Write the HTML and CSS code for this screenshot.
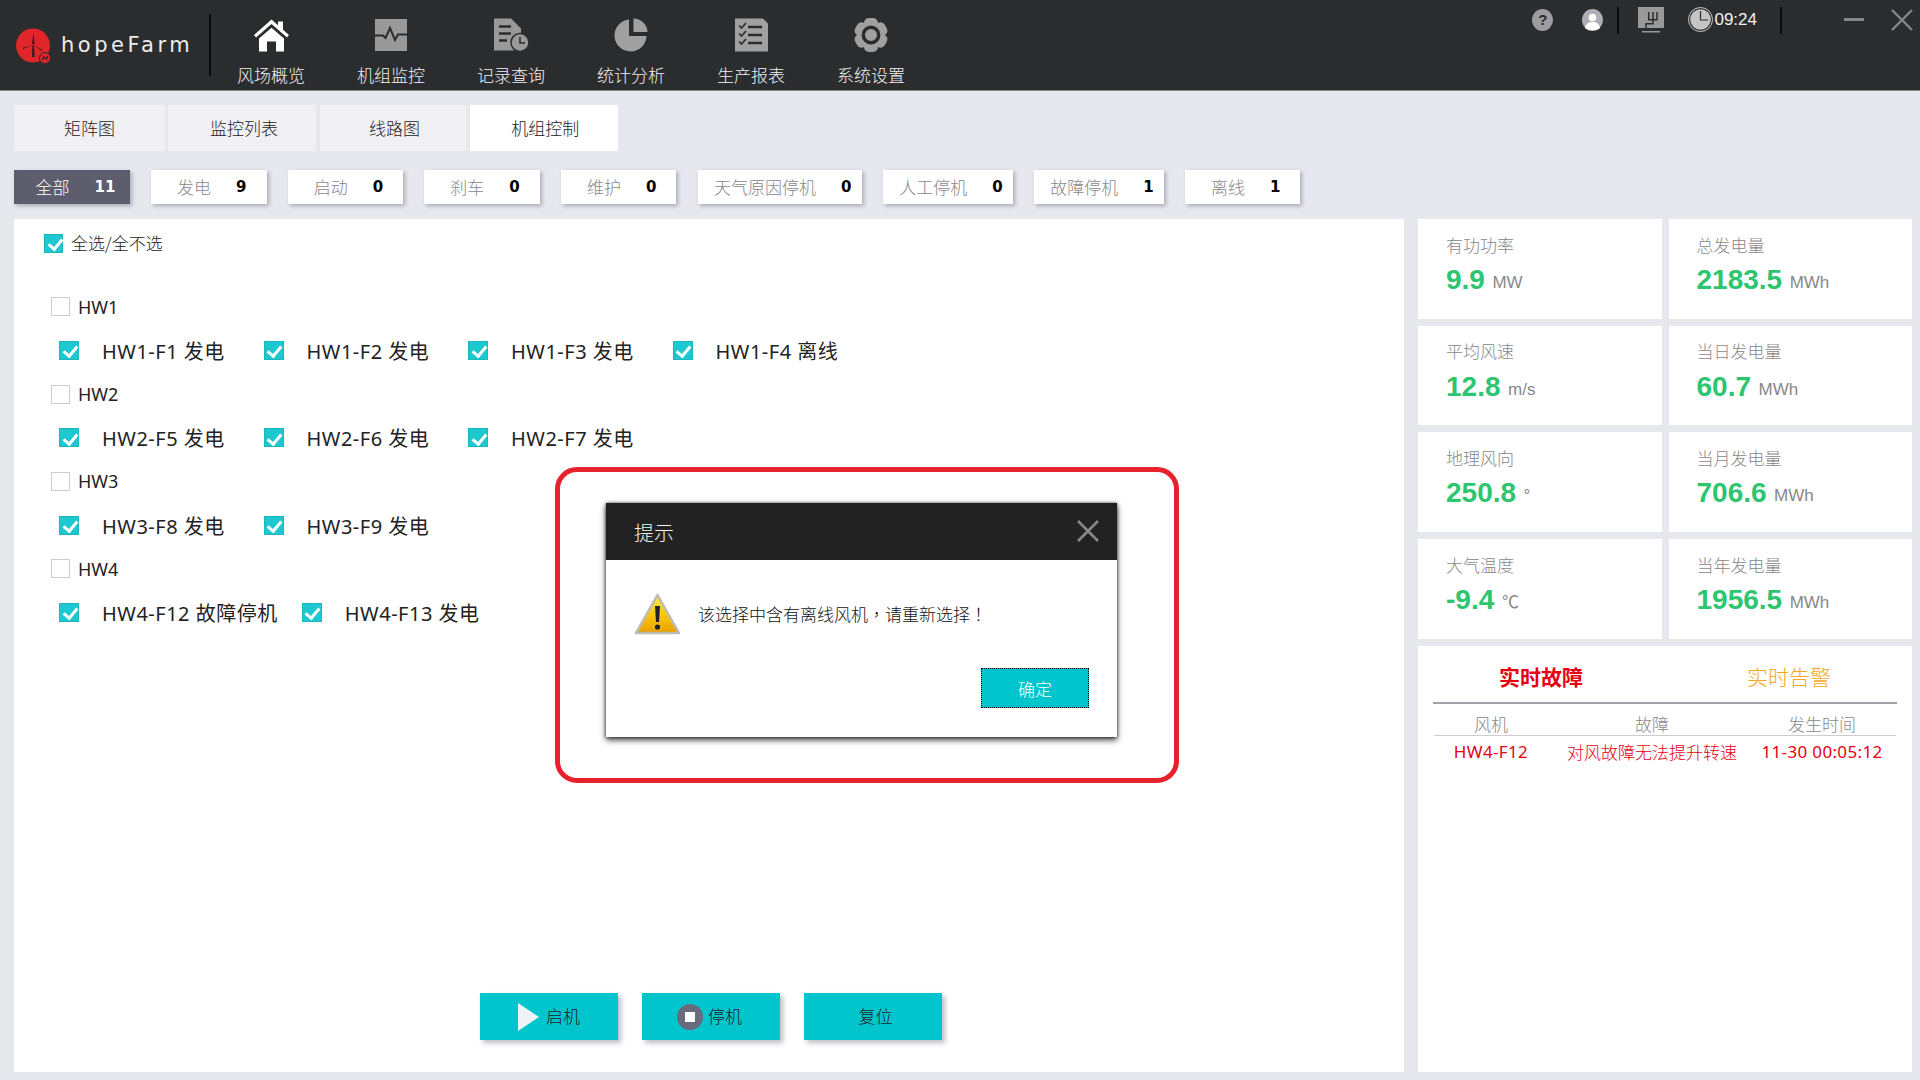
FILE: index.html
```html
<!DOCTYPE html>
<html lang="zh-CN">
<head>
  <meta charset="UTF-8" />
  <title>hopeFarm 机组控制</title>
  <link rel="stylesheet" href="styles.css">
</head>
<body>
  <header class="topbar">
    <div class="logo">
      <svg class="logo-mark" width="36" height="37" viewBox="0 0 36 37">
        <circle cx="17" cy="17.5" r="17" fill="#e0252b"/>
        <path d="M16 16 L17.5 5 L18.5 16 Z M16.5 17 L7 21 L6.5 20 Z M18 16.5 L26 22 L25.5 23 Z" fill="#2b2020"/>
        <path d="M16.5 17 H18 L18.6 29 H16 Z" fill="#2b2020"/>
        <circle cx="29" cy="30" r="5.5" fill="#e0252b" stroke="#2b2c2e" stroke-width="1"/>
        <path d="M26.5 32 L28 28 M31.5 28 L30 32 M27.5 30 H30.5" stroke="#2b2020" stroke-width="1.2"/>
      </svg>
      <span class="logo-text">hopeFarm</span>
    </div>
    <nav class="nav">
      <a class="nav-item">
        <svg width="35" height="33" viewBox="0 0 35 33"><path d="M0 16.5 L17.5 1 L24 6.8 V3 H29 V11.2 L35 16.5 L33 19 L17.5 5.6 L2 19 Z" fill="#fff"/><path d="M5 20 L17.5 9.2 L30 20 V33 H22 V23 H13 V33 H5 Z" fill="#fff"/></svg>
        <span>风场概览</span>
      </a>
      <a class="nav-item">
        <svg width="32" height="32" viewBox="0 0 32 32"><rect width="32" height="32" fill="#999"/><path d="M0 16.5 H8 L10.5 19 L15 9 L20 21 L23 15.5 H32" fill="none" stroke="#2b2c2e" stroke-width="2"/></svg>
        <span>机组监控</span>
      </a>
      <a class="nav-item">
        <svg width="35" height="33" viewBox="0 0 35 33"><path d="M0 0 H17 L27 10 V32 H0 Z" fill="#999"/><path d="M5 8 H17 M5 15 H17 M5 22 H13" stroke="#2b2c2e" stroke-width="2.4"/><circle cx="26" cy="24" r="9" fill="#999" stroke="#2b2c2e" stroke-width="1.5"/><path d="M26 18.5 V24.5 H31" fill="none" stroke="#2b2c2e" stroke-width="1.6"/></svg>
        <span>记录查询</span>
      </a>
      <a class="nav-item">
        <svg width="34" height="33" viewBox="0 0 34 33"><path d="M15 1 A16 16 0 1 0 32.5 17.5 H15 Z" fill="#a0a0a0"/><path d="M19.5 0 A14 14 0 0 1 33.5 13.5 H19.5 Z" fill="#a0a0a0"/></svg>
        <span>统计分析</span>
      </a>
      <a class="nav-item">
        <svg width="33" height="33" viewBox="0 0 33 33"><path d="M0 0 H28 L33 5 V33 H0 Z" fill="#a0a0a0"/><g fill="none" stroke="#2b2c2e"><path d="M4 7 L6.5 9.5 L11 4.5 M4 15 L6.5 17.5 L11 12.5 M4 23 L6.5 25.5 L11 20.5" stroke-width="1.7"/><path d="M13 8.5 H27 M13 16.5 H27 M13 24.5 H27" stroke-width="2.5"/></g></svg>
        <span>生产报表</span>
      </a>
      <a class="nav-item">
        <svg width="36" height="34" viewBox="0 0 36 34"><g fill="#a0a0a0"><rect x="11" y="0" width="14" height="34" rx="5"/><rect x="11" y="0" width="14" height="34" rx="5" transform="rotate(60 18 17)"/><rect x="11" y="0" width="14" height="34" rx="5" transform="rotate(120 18 17)"/></g><circle cx="18" cy="17" r="13" fill="#a0a0a0"/><circle cx="18" cy="17" r="7.7" fill="none" stroke="#2b2c2e" stroke-width="3.4"/></svg>
        <span>系统设置</span>
      </a>
    </nav>
    <div class="tools">
      <span class="tool-help">?</span>
      <svg class="tool-user" width="21" height="22" viewBox="0 0 21 22"><ellipse cx="10.5" cy="11" rx="10.5" ry="11" fill="#aeaeb6"/><circle cx="10.5" cy="8.5" r="3.8" fill="#fff"/><path d="M3 19 C4 14 7 13 10.5 13 C14 13 17 14 18 19 C15 22 6 22 3 19 Z" fill="#fff"/></svg>
      <i class="tool-sep sep-a"></i>
      <svg class="tool-screen" width="26" height="26" viewBox="0 0 26 26"><rect width="26" height="21" fill="#999"/><path d="M10.7 5 V12.7 H19 V5 M15 5 V16.7 H8 V21" fill="none" stroke="#2b2c2e" stroke-width="1.5"/><rect x="4" y="24" width="18" height="1.5" fill="#999"/></svg>
      <svg class="tool-clock" width="25" height="25" viewBox="0 0 25 25"><circle cx="12.5" cy="12.5" r="12" fill="none" stroke="#ccc" stroke-width="1"/><circle cx="12.5" cy="12.5" r="10.3" fill="#c4c4c4"/><path d="M12.5 4 V13 H20" fill="none" stroke="#2b2c2e" stroke-width="1.2"/></svg>
      <span class="tool-time">09:24</span>
      <i class="tool-sep sep-b"></i>
      <i class="tool-min"></i>
      <svg class="tool-close" width="22" height="22" viewBox="0 0 22 22"><path d="M1 1 L21 21 M21 1 L1 21" stroke="#888" stroke-width="2.4"/></svg>
    </div>
  </header>

  <div class="tabs">
    <a class="tab tab-a">矩阵图</a>
    <a class="tab">监控列表</a>
    <a class="tab tab-c">线路图</a>
    <a class="tab active">机组控制</a>
  </div>

  <div class="chips">
    <div class="chip chip-active"><span>全部</span><b>11</b></div>
    <div class="chip"><span>发电</span><b>9</b></div>
    <div class="chip"><span>启动</span><b>0</b></div>
    <div class="chip"><span>刹车</span><b>0</b></div>
    <div class="chip"><span>维护</span><b>0</b></div>
    <div class="chip chip-long"><span>天气原因停机</span><b>0</b></div>
    <div class="chip chip-long"><span>人工停机</span><b>0</b></div>
    <div class="chip chip-long"><span>故障停机</span><b>1</b></div>
    <div class="chip"><span>离线</span><b>1</b></div>
  </div>

  <main class="content">
    <section class="control">
      <label class="all-row"><i class="check on"></i>全选/全不选</label>

      <div class="units">
        <div class="group-row"><i class="check"></i>HW1</div>
        <div class="unit-row">
          <div class="unit"><i class="check on"></i><span>HW1-F1 发电</span></div>
          <div class="unit"><i class="check on"></i><span>HW1-F2 发电</span></div>
          <div class="unit"><i class="check on"></i><span>HW1-F3 发电</span></div>
          <div class="unit"><i class="check on"></i><span>HW1-F4 离线</span></div>
        </div>
        <div class="group-row"><i class="check"></i>HW2</div>
        <div class="unit-row">
          <div class="unit"><i class="check on"></i><span>HW2-F5 发电</span></div>
          <div class="unit"><i class="check on"></i><span>HW2-F6 发电</span></div>
          <div class="unit"><i class="check on"></i><span>HW2-F7 发电</span></div>
        </div>
        <div class="group-row"><i class="check"></i>HW3</div>
        <div class="unit-row">
          <div class="unit"><i class="check on"></i><span>HW3-F8 发电</span></div>
          <div class="unit"><i class="check on"></i><span>HW3-F9 发电</span></div>
        </div>
        <div class="group-row"><i class="check"></i>HW4</div>
        <div class="unit-row">
          <div class="unit"><i class="check on"></i><span>HW4-F12 故障停机</span></div>
          <div class="unit"><i class="check on"></i><span>HW4-F13 发电</span></div>
        </div>
      </div>

      <div class="actions">
        <button class="action action-start">
          <svg width="21" height="28" viewBox="0 0 21 28"><path d="M0 0 L21 14 L0 28 Z" fill="#eef3f5"/></svg><span>启机</span>
        </button>
        <button class="action action-stop">
          <svg width="26" height="26" viewBox="0 0 26 26"><circle cx="13" cy="13" r="13" fill="#6a6a7e"/><rect x="8" y="8" width="10" height="10" fill="#fff"/></svg><span>停机</span>
        </button>
        <button class="action action-reset"><span>复位</span></button>
      </div>

      <div class="callout">
        <div class="dialog">
          <div class="dialog-head">
            <span>提示</span>
            <svg width="22" height="22" viewBox="0 0 22 22"><path d="M1 1 L21 21 M21 1 L1 21" stroke="#888" stroke-width="2.6"/></svg>
          </div>
          <div class="dialog-body">
            <svg width="47" height="43" viewBox="0 0 47 43">
              <defs>
                <linearGradient id="warnFill" x1="0" y1="0" x2="0" y2="1">
                  <stop offset="0" stop-color="#f6ea50"/>
                  <stop offset="0.5" stop-color="#fbc80c"/>
                  <stop offset="1" stop-color="#e8a000"/>
                </linearGradient>
              </defs>
              <path d="M23.5 2 L45 40 H2 Z" fill="url(#warnFill)" stroke="#bcbcb4" stroke-width="2.5" stroke-linejoin="round"/>
              <path d="M21 13 H26 L25 29 H22 Z" fill="#222"/>
              <circle cx="23.5" cy="34" r="2.6" fill="#222"/>
            </svg>
            <p>该选择中含有离线风机<span class="punct" lang="zh-TW">，</span>请重新选择<span class="punct" lang="zh-TW">！</span></p>
          </div>
          <div class="dialog-foot"><button class="ok">确定</button></div>
        </div>
      </div>
    </section>

    <aside class="side">
      <div class="stats">
        <div class="stat"><div class="stat-label">有功功率</div><div class="stat-value">9.9<small>MW</small></div></div>
        <div class="stat"><div class="stat-label">总发电量</div><div class="stat-value">2183.5<small>MWh</small></div></div>
        <div class="stat"><div class="stat-label">平均风速</div><div class="stat-value">12.8<small>m/s</small></div></div>
        <div class="stat"><div class="stat-label">当日发电量</div><div class="stat-value">60.7<small>MWh</small></div></div>
        <div class="stat"><div class="stat-label">地理风向</div><div class="stat-value">250.8<small>°</small></div></div>
        <div class="stat"><div class="stat-label">当月发电量</div><div class="stat-value">706.6<small>MWh</small></div></div>
        <div class="stat"><div class="stat-label">大气温度</div><div class="stat-value">-9.4<small>℃</small></div></div>
        <div class="stat"><div class="stat-label">当年发电量</div><div class="stat-value">1956.5<small>MWh</small></div></div>
      </div>
      <div class="faults">
        <div class="fault-tabs">
          <span class="fault-tab red">实时故障</span>
          <span class="fault-tab orange">实时告警</span>
        </div>
        <div class="fault-row fault-head"><span>风机</span><span>故障</span><span>发生时间</span></div>
        <div class="fault-row fault-item"><span class="latin">HW4-F12</span><span>对风故障无法提升转速</span><span class="latin">11-30 00:05:12</span></div>
      </div>
    </aside>
  </main>
</body>
</html>
```

FILE: styles.css
```css
* {
  box-sizing: border-box;
}
html, body {
  margin: 0;
  height: 1080px;
  overflow: hidden;
}
body {
  background: #e7e7ee;
  font-family: "Noto Sans CJK SC", "Liberation Sans", sans-serif;
  font-size: 17px;
  font-weight: 300;
  color: #222;
}
button {
  font: inherit;
  border: none;
  cursor: pointer;
}

/* top bar */
.topbar {
  height: 91px;
  background: #2b2c2e;
  border-bottom: 1px solid #8a8a8e;
  display: flex;
  position: relative;
}
.logo {
  width: 211px;
  height: 62px;
  margin-top: 14px;
  padding: 14px 0 0 16px;
  border-right: 2px solid #0c0c0c;
  display: flex;
  gap: 9px;
}
.logo-mark {
  flex: none;
}
.logo-text {
  font-family: "DejaVu Sans", sans-serif;
  font-size: 21px;
  font-weight: 400;
  line-height: 34px;
  letter-spacing: 3.5px;
  color: #ececec;
}
.nav {
  display: flex;
}
.nav-item {
  width: 120px;
  height: 90px;
  padding-top: 18px;
  display: flex;
  flex-direction: column;
  align-items: center;
  color: #f2f2f2;
  cursor: pointer;
}
.nav-item svg {
  height: 34px;
  flex: none;
}
.nav-item span {
  margin-top: 10px;
  line-height: 26px;
}
.tools {
  position: absolute;
  top: 7px;
  right: 7px;
  display: flex;
  align-items: flex-start;
}
.tool-help {
  width: 21px;
  height: 22px;
  margin-top: 2px;
  border-radius: 50%;
  background: #9c9ca2;
  color: #2b2c2e;
  font: bold 15px/22px "Liberation Sans", sans-serif;
  text-align: center;
}
.tool-user {
  margin: 2px 0 0 29px;
}
.tool-sep {
  width: 2px;
  height: 27px;
  background: #0c0c0c;
}
.sep-a {
  margin-left: 14px;
}
.tool-screen {
  margin-left: 19px;
}
.tool-clock {
  margin-left: 24px;
}
.tool-time {
  margin-left: 1px;
  font: 17px/26px "Liberation Sans", sans-serif;
  color: #f2f2f2;
}
.sep-b {
  margin-left: 23px;
}
.tool-min {
  width: 20px;
  height: 3px;
  margin: 11px 0 0 62px;
  background: #888;
}
.tool-close {
  margin: 2px 0 0 27px;
}

/* tabs */
.tabs {
  margin: 14px 0 0 14px;
  display: flex;
  gap: 3.4px;
}
.tab {
  width: 148px;
  height: 46px;
  padding-left: 3px;
  background: #f1f1f5;
  text-align: center;
  line-height: 46px;
  cursor: pointer;
}
.tab-a {
  width: 151px;
  padding-left: 0;
}
.tab-c {
  width: 146.6px;
}
.tab.active {
  background: #fff;
}

/* status chips */
.chips {
  margin: 19px 0 0 14px;
  display: flex;
  gap: 21.2px;
}
.chip {
  height: 34px;
  padding: 0 20px 0 26px;
  background: #fff;
  color: #888;
  display: flex;
  align-items: center;
  gap: 25px;
  box-shadow: 2px 2px 4px rgba(60, 60, 90, 0.35);
}
.chip span {
  margin-top: -2px;
}
.chip b {
  font: bold 15px "DejaVu Sans", sans-serif;
  color: #000;
}
.chip-long {
  padding: 0 10px 0 16.5px;
}
.chip-active {
  padding: 0 14.5px 0 21.5px;
  background: #5d5d6e;
  color: #fff;
}
.chip-active b {
  color: #fff;
}

/* main area */
.content {
  margin: 15px 8px 0 14px;
  height: 853px;
  display: flex;
  gap: 14px;
}
.control {
  width: 1390px;
  background: #fff;
  position: relative;
  padding: 14px 0 0 30px;
}
.check {
  width: 19px;
  height: 19px;
  flex: none;
  background: #fff;
  border: 1px solid #ccc;
  position: relative;
}
.check.on {
  background: #1ec8d0;
  border-color: #1cb6bd;
}
.check.on::after {
  content: "";
  position: absolute;
  left: 5.5px;
  top: 1.5px;
  width: 6px;
  height: 11px;
  border: solid #fff;
  border-width: 0 3px 3px 0;
  transform: rotate(40deg);
}
.all-row {
  height: 20px;
  display: flex;
  align-items: center;
  gap: 8px;
  line-height: 20px;
}
.units {
  margin: 32px 0 0 7px;
}
.group-row {
  height: 43.67px;
  display: flex;
  align-items: center;
  gap: 8px;
  font-family: "Noto Sans", sans-serif;
  font-size: 18px;
  font-weight: 400;
}
.unit-row {
  height: 43.67px;
  padding-left: 8px;
  display: flex;
  align-items: center;
}
.unit {
  margin-right: 24px;
  display: flex;
  align-items: center;
  gap: 23px;
}
.unit .check {
  width: 20px;
}
.unit span {
  min-width: 137.5px;
  font-family: "Noto Sans", "Noto Sans CJK SC", sans-serif;
  font-size: 20px;
  font-weight: 400;
  letter-spacing: 0.5px;
}
.actions {
  position: absolute;
  left: 466px;
  bottom: 32px;
  display: flex;
  gap: 24px;
}
.action {
  width: 138px;
  height: 47px;
  background: #00c5cd;
  color: #222;
  display: flex;
  align-items: center;
  justify-content: center;
  font-weight: 300;
  box-shadow: 3px 3px 5px rgba(60, 60, 90, 0.35);
}
.action span {
  margin-top: -2px;
}
.action-start {
  gap: 7px;
}
.action-stop {
  gap: 5px;
  padding-right: 9px;
}
.action-reset {
  padding-left: 11px;
}

/* dialog with red callout */
.callout {
  position: absolute;
  left: 541px;
  top: 248px;
  width: 624px;
  height: 316px;
  padding: 31px 0 0 46px;
  border: 5px solid #e8222c;
  border-radius: 22px;
}
.dialog {
  width: 511px;
  height: 234px;
  background: #fff;
  box-shadow: 0 3px 6px rgba(0, 0, 0, 0.75), 0 0 3px rgba(0, 0, 0, 0.6);
}
.dialog-head {
  height: 57px;
  padding: 0 18px 0 28px;
  background: #222;
  color: #f4f4f4;
  font-size: 20px;
  display: flex;
  align-items: center;
  justify-content: space-between;
}
.dialog-head span {
  margin-top: 2px;
}
.dialog-head svg {
  margin-top: -1px;
}
.dialog-body {
  height: 108px;
  padding: 33px 0 0 28px;
  display: flex;
  gap: 17px;
}
.dialog-body p {
  margin: 0;
  line-height: 42px;
  color: #111;
}
.punct {
  font-family: "Noto Sans CJK TC", sans-serif;
}
.dialog-foot {
  display: flex;
  justify-content: flex-end;
  padding-right: 28px;
}
.ok {
  width: 108px;
  height: 40px;
  background: #00c5cd;
  color: #fff;
  border: 1px dotted #000;
  font-weight: 300;
}

/* right column */
.side {
  width: 494px;
  display: flex;
  flex-direction: column;
  gap: 7px;
}
.stats {
  display: grid;
  grid-template-columns: 1fr 1fr;
  grid-auto-rows: 99.5px;
  gap: 7.2px 7px;
}
.stat {
  background: #fff;
  padding: 12.5px 0 0 28px;
}
.stat-label {
  color: #888;
  line-height: 25px;
}
.stat-value {
  margin-top: 6.5px;
  font: bold 28px/34px "Liberation Sans", sans-serif;
  color: #2dc56f;
}
.stat-value small {
  margin-left: 7.5px;
  font-size: 17px;
  font-weight: normal;
  color: #888;
  position: relative;
  top: -1px;
}
.faults {
  flex: 1;
  background: #fff;
  padding: 15px 15px 0;
}
.fault-tabs {
  height: 43px;
  border-bottom: 2px solid #a0a0a8;
  display: grid;
  grid-template-columns: 1fr 1fr;
}
.fault-tab {
  padding-left: 66px;
  font-size: 21px;
  line-height: 30px;
}
.fault-tab.red {
  color: #e60012;
  font-weight: 700;
}
.fault-tab.orange {
  padding-left: 82px;
  color: #f5a623;
}
.fault-row {
  display: grid;
  grid-template-columns: 114px 208px 132px;
  margin: 0 1px;
  text-align: center;
}
.fault-head {
  height: 32px;
  line-height: 39px;
  color: #888;
  border-bottom: 1px solid #ccc;
}
.fault-item {
  height: 28px;
  line-height: 31px;
  color: #e60012;
}
.latin {
  font-family: "Noto Sans", sans-serif;
  font-weight: 400;
  letter-spacing: 0.35px;
}
```
